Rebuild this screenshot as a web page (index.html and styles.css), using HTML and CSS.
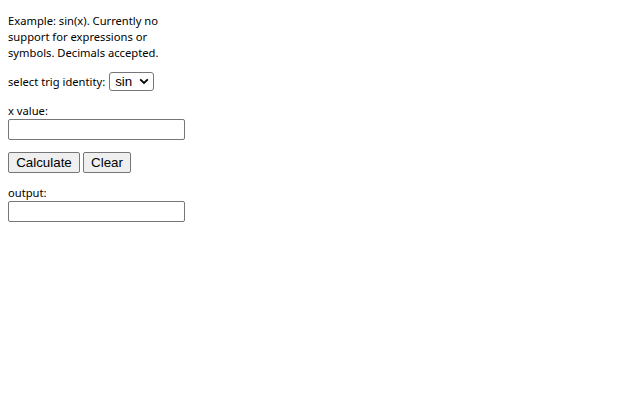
FILE: index.html
```html
<!DOCTYPE html>
<html>
<head>
<meta charset="utf-8">
<link rel="stylesheet" href="styles.css">
</head>
<body>
<div class="page">
  <p class="desc">Example: sin(x). Currently no support for expressions or symbols. Decimals accepted.</p>
  <div class="row">
    <span class="label">select trig identity:</span>
    <div class="select">
      <span class="sel-text">sin</span>
      <svg class="chev" width="10" height="7" viewBox="0 0 10 7"><path d="M1.2 1.3 L5 5 L8.8 1.3" fill="none" stroke="#000" stroke-width="1.8"/></svg>
    </div>
  </div>
  <div class="field">
    <div class="flabel">x value:</div>
    <div class="input"></div>
  </div>
  <div class="buttons">
    <div class="btn calc">Calculate</div>
    <div class="btn clear">Clear</div>
  </div>
  <div class="field">
    <div class="flabel">output:</div>
    <div class="input"></div>
  </div>
</div>
</body>
</html>
```
FILE: styles.css
```css
html, body {
  margin: 0;
  padding: 0;
  background: #ffffff;
}
.page {
  padding: 13px 8px;
  font-family: "Noto Sans", "DejaVu Sans", sans-serif;
  font-size: 11.2px;
  line-height: 16px;
  color: #000;
}
.desc {
  margin: 0;
  width: 165px;
}
.row {
  display: flex;
  align-items: center;
  gap: 4px;
  margin-top: 11px;
  height: 19px;
}
.select {
  box-sizing: border-box;
  width: 45px;
  height: 19px;
  border: 1px solid #767676;
  border-radius: 3px;
  display: flex;
  align-items: center;
  justify-content: space-between;
  padding: 0 4px 0 5px;
  font-family: "Liberation Sans", Arial, sans-serif;
  font-size: 13.33px;
}
.chev { display: block; }
.field {
  margin-top: 12px;
  display: flex;
  flex-direction: column;
}
.flabel { height: 16px; }
.input {
  box-sizing: border-box;
  width: 177px;
  height: 21px;
  border: 1px solid #767676;
  border-radius: 2px;
  background: #fff;
}
.buttons {
  display: flex;
  gap: 3px;
  margin-top: 12px;
  margin-bottom: 1px;
}
.btn {
  box-sizing: border-box;
  height: 21px;
  border: 1px solid #767676;
  border-radius: 2px;
  background: #efefef;
  font-family: "Liberation Sans", Arial, sans-serif;
  font-size: 13.33px;
  line-height: 19px;
  text-align: center;
}
.calc { width: 72px; }
.clear { width: 48px; }
```
